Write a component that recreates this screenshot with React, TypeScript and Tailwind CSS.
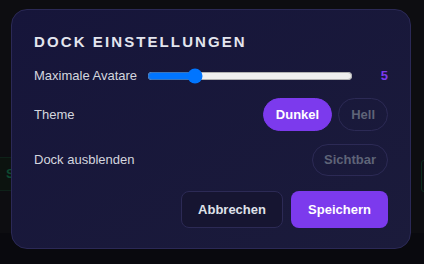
import { useState } from "react";

const font = { fontFamily: '"Liberation Sans", Arial, sans-serif' };

const Pill = ({ label, active, onClick }: { label: string; active?: boolean; onClick?: () => void }) => (
  <button
    onClick={onClick}
    className={
      active
        ? "h-[33px] px-[12px] rounded-full bg-[#7c3aed] text-white text-[13px] font-bold border border-[#7c3aed]"
        : "h-[33px] px-[12px] rounded-full border border-[#2c2a55] text-[#5f6478] text-[13px] font-bold"
    }
  >
    {label}
  </button>
);

export default function App() {
  const [avatars, setAvatars] = useState(5);
  const [theme, setTheme] = useState("dark");

  return (
    <div className="relative w-[424px] h-[264px] bg-[#0d0d11] overflow-hidden" style={font}>
      {/* dimmed page behind */}
      <div className="absolute left-[-4px] top-[157px] w-[40px] h-[34px] border border-[#0e2119] bg-[#0c130f] text-[#0d4a31] text-[13px] font-bold pl-[9px] leading-[32px]">
        S
      </div>
      <div className="absolute left-[421px] top-[160px] w-[10px] h-[32px] border border-[#0e2a1d] rounded-[3px]" />
      <div className="absolute left-0 top-[233px] w-full h-[31px] bg-[#09090e]" />

      <div className="relative ml-[11px] mt-[9px] w-[400px] h-[240px] rounded-[16px] border border-[#2b2956] bg-gradient-to-br from-[#16153a] to-[#1b1b3b] px-[22px] pt-[22px]">
        <h2 className="text-[15px] leading-[20px] font-extrabold tracking-[0.14em] text-[#e3e5ee] uppercase">
          Dock Einstellungen
        </h2>

        <div className="mt-[14px] h-[20px] flex items-center gap-[10px]">
          <span className="text-[13px] text-[#d4d6df] whitespace-nowrap">Maximale Avatare</span>
          <input
            type="range"
            min={1}
            max={20}
            value={avatars}
            onChange={(e) => setAvatars(Number(e.target.value))}
            className="w-[206px]"
          />
          <span className="flex-1 text-right text-[13px] font-bold text-[#7c3aed]">{avatars}</span>
        </div>

        <div className="mt-[12px] flex items-center justify-between">
          <span className="text-[13px] text-[#d4d6df]">Theme</span>
          <div className="flex gap-[6px]">
            <Pill label="Dunkel" active={theme === "dark"} onClick={() => setTheme("dark")} />
            <Pill label="Hell" active={theme === "light"} onClick={() => setTheme("light")} />
          </div>
        </div>

        <div className="mt-[13px] flex items-center justify-between">
          <span className="text-[13px] text-[#d4d6df]">Dock ausblenden</span>
          <button className="h-[32px] px-[11px] rounded-full border border-[#2c2a55] text-[#5f6478] text-[13px] font-bold">
            Sichtbar
          </button>
        </div>

        <div className="mt-[15px] flex justify-end gap-[8px]">
          <button className="h-[37px] w-[102px] rounded-[8px] border border-[#2c2a55] bg-[#161531] text-[#dfe1ea] text-[13px] font-bold">
            Abbrechen
          </button>
          <button className="h-[37px] w-[97px] rounded-[8px] bg-[#7c3aed] text-white text-[13px] font-bold">
            Speichern
          </button>
        </div>
      </div>
    </div>
  );
}
